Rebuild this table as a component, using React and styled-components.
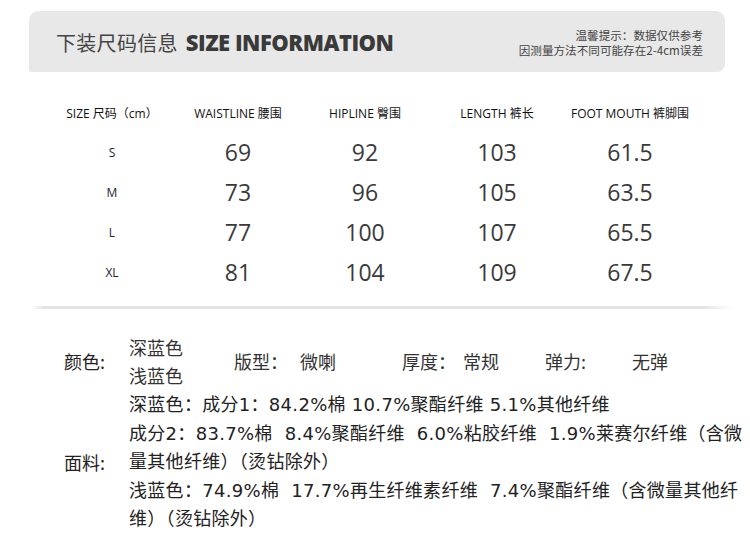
import React from "react";
import styled, { createGlobalStyle } from "styled-components";

const Global = createGlobalStyle`
  html, body { margin: 0; padding: 0; background: #fff; overflow: hidden; }
  body { font-family: "Open Sans", "Noto Sans CJK SC", sans-serif; color: #333; }
`;

const Page = styled.div`
  width: 750px;
  height: 537px;
  padding-top: 11px;
  box-sizing: border-box;
`;

const HeaderCard = styled.header`
  margin: 0 25px 0 29px;
  height: 61px;
  background: #e8e8e8;
  border-radius: 9px 9px 8px 2px;
  display: flex;
  align-items: center;
  justify-content: space-between;
  padding: 0 22px 0 27px;
`;

const Title = styled.h1`
  margin: 0;
  display: flex;
  align-items: baseline;
  font-weight: 400;
`;

const TitleCn = styled.span`
  font-family: "Noto Sans CJK SC", sans-serif;
  font-size: 20px;
  color: #444;
  letter-spacing: 0.3px;
`;

const TitleEn = styled.span`
  margin-left: 8px;
  font-family: "Open Sans", sans-serif;
  font-weight: 800;
  font-size: 22px;
  letter-spacing: -0.5px;
  color: #3a3a3a;
`;

const Note = styled.div`
  text-align: right;
  font-family: "Noto Sans CJK SC", sans-serif;
  font-size: 11.6px;
  line-height: 15px;
  color: #444;
  margin-top: 2px;
`;

const NoteLine = styled.div`
  white-space: nowrap;
`;

const Table = styled.div`
  margin-top: 22px;
  padding-left: 48px;
  display: grid;
  grid-template-columns: 128px 124px 130px 134px 132px;
  grid-template-rows: 38px repeat(4, 40px);
  align-items: center;
  justify-items: center;
`;

const HeadCell = styled.div`
  font-family: "Open Sans", "Noto Sans CJK SC", sans-serif;
  font-size: 12px;
  color: #111;
  white-space: nowrap;
`;

const SizeCell = styled.div`
  font-family: "Open Sans", sans-serif;
  font-size: 12px;
  color: #223;
`;

const ValueCell = styled.div`
  font-family: "Open Sans", sans-serif;
  font-size: 23px;
  color: #3a3a3a;
`;

const Divider = styled.div`
  margin: 14px 18px 0 30px;
  height: 3px;
  background: linear-gradient(
    to right,
    rgba(225, 225, 225, 0) 0%,
    #e4e4e4 2%,
    #e4e4e4 96%,
    rgba(225, 225, 225, 0) 100%
  );
`;

const Specs = styled.section`
  margin-top: 24px;
  padding-left: 64px;
  font-family: "DejaVu Sans", "Noto Sans CJK SC", sans-serif;
  font-size: 18px;
  color: #222;
`;

const SpecRow = styled.div`
  display: flex;
  align-items: center;
  margin-top: ${(p) => p.$gap || 0}px;
`;

const Label = styled.div`
  width: 65px;
  flex: none;
  font-family: "Noto Sans CJK SC", sans-serif;
  font-size: 18px;
`;

const Lines = styled.div`
  width: ${(p) => (p.$w ? `${p.$w}px` : "auto")};
  flex: none;
  line-height: ${(p) => p.$lh}px;
  letter-spacing: ${(p) => p.$ls || 0}px;
  white-space: pre;
`;

const Attr = styled.div`
  width: ${(p) => p.$w}px;
  flex: none;
  font-family: "Noto Sans CJK SC", sans-serif;
  font-size: 18px;
  color: #333;
  white-space: nowrap;
`;

const cols = [
  "SIZE 尺码（cm）",
  "WAISTLINE 腰围",
  "HIPLINE 臀围",
  "LENGTH 裤长",
  "FOOT MOUTH 裤脚围",
];

const rows = [
  ["S", "69", "92", "103", "61.5"],
  ["M", "73", "96", "105", "63.5"],
  ["L", "77", "100", "107", "65.5"],
  ["XL", "81", "104", "109", "67.5"],
];

const attrs = [
  ["版型：", 66],
  ["微喇", 102],
  ["厚度：", 61],
  ["常规", 82],
  ["弹力:", 87],
  ["无弹", 60],
];

const fabric = [
  "深蓝色：成分1：84.2%棉 10.7%聚酯纤维 5.1%其他纤维",
  "成分2：83.7%棉  8.4%聚酯纤维  6.0%粘胶纤维  1.9%莱赛尔纤维（含微",
  "量其他纤维）（烫钻除外）",
  "浅蓝色：74.9%棉  17.7%再生纤维素纤维  7.4%聚酯纤维（含微量其他纤",
  "维）（烫钻除外）",
];

export default function App() {
  return (
    <Page>
      <Global />
      <HeaderCard>
        <Title>
          <TitleCn>下装尺码信息</TitleCn>
          <TitleEn>SIZE INFORMATION</TitleEn>
        </Title>
        <Note>
          <NoteLine>温馨提示：数据仅供参考</NoteLine>
          <NoteLine>因测量方法不同可能存在2-4cm误差</NoteLine>
        </Note>
      </HeaderCard>

      <Table>
        {cols.map((c) => (
          <HeadCell key={c}>{c}</HeadCell>
        ))}
        {rows.map((r) =>
          r.map((v, i) =>
            i === 0 ? (
              <SizeCell key={r[0] + i}>{v}</SizeCell>
            ) : (
              <ValueCell key={r[0] + i}>{v}</ValueCell>
            )
          )
        )}
      </Table>

      <Divider />

      <Specs>
        <SpecRow>
          <Label>颜色:</Label>
          <Lines $w={105} $lh={28}>
            <Attr $w={105}>深蓝色</Attr>
            <Attr $w={105}>浅蓝色</Attr>
          </Lines>
          {attrs.map(([t, w]) => (
            <Attr key={t} $w={w}>
              {t}
            </Attr>
          ))}
        </SpecRow>
        <SpecRow $gap={2}>
          <Label>面料:</Label>
          <Lines $lh={28.5} $ls={0.3}>
            {fabric.map((l) => (
              <div key={l}>{l}</div>
            ))}
          </Lines>
        </SpecRow>
      </Specs>
    </Page>
  );
}
